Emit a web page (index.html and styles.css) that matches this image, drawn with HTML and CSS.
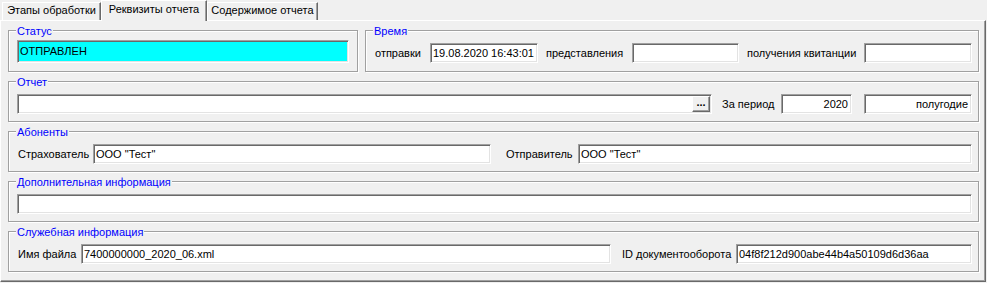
FILE: index.html
```html
<!DOCTYPE html>
<html lang="ru">
<head>
<meta charset="utf-8">
<title>Реквизиты отчета</title>
<link rel="stylesheet" href="styles.css">
</head>
<body>
<div class="tabs">
  <div class="tab tab-stages">Этапы обработки</div>
  <div class="tab tab-active">Реквизиты отчета</div>
  <div class="tab tab-content">Содержимое отчета</div>
</div>
<div class="panel">
  <div class="row-top">
    <div class="grp grp-status">
      <span class="legend">Статус</span>
      <div class="field field-status">ОТПРАВЛЕН</div>
    </div>
    <div class="grp grp-time">
      <span class="legend">Время</span>
      <div class="line line-time">
        <span class="lbl lbl-first">отправки</span>
        <div class="field">19.08.2020 16:43:01</div>
        <span class="lbl">представления</span>
        <div class="field"></div>
        <span class="lbl">получения квитанции</span>
        <div class="field"></div>
      </div>
    </div>
  </div>
  <div class="grp">
    <span class="legend">Отчет</span>
    <div class="line line-report">
      <div class="field field-btn"><span class="fill"></span><span class="btn">...</span></div>
      <span class="lbl lbl-period">За период</span>
      <div class="field field-right">2020</div>
      <div class="field field-right field-half">полугодие</div>
    </div>
  </div>
  <div class="grp">
    <span class="legend">Абоненты</span>
    <div class="line line-subs">
      <span class="lbl lbl-first">Страхователь</span>
      <div class="field">ООО "Тест"</div>
      <span class="lbl lbl-sender">Отправитель</span>
      <div class="field">ООО "Тест"</div>
    </div>
  </div>
  <div class="grp">
    <span class="legend">Дополнительная информация</span>
    <div class="line line-full">
      <div class="field"></div>
    </div>
  </div>
  <div class="grp">
    <span class="legend">Служебная информация</span>
    <div class="line line-service">
      <span class="lbl lbl-first">Имя файла</span>
      <div class="field">7400000000_2020_06.xml</div>
      <span class="lbl lbl-id">ID документооборота</span>
      <div class="field">04f8f212d900abe44b4a50109d6d36aa</div>
    </div>
  </div>
</div>
</body>
</html>
```

FILE: styles.css
```css
* { box-sizing: border-box; }

body {
  margin: 0;
  background: #f0f0f0;
  font-family: "Liberation Sans", Arial, sans-serif;
  font-size: 11px;
  line-height: 13px;
  color: #000;
}

/* Tabs */
.tabs {
  display: flex;
  align-items: flex-end;
  height: 20px;
  padding-left: 2px;
}

.tab {
  height: 18px;
  padding-top: 1px;
  text-align: center;
  white-space: nowrap;
  border-top: 1px solid #fff;
  border-left: 1px solid #fff;
  border-right: 1px solid #696969;
  box-shadow: inset -1px 0 0 #a0a0a0;
}

.tab-stages { width: 99px; }
.tab-content { width: 111px; }

.tab-active {
  width: 106px;
  height: 21px;
  margin-bottom: -1px;
  padding-top: 2px;
  background: #f0f0f0;
  z-index: 1;
}

/* Panel */
.panel {
  width: 986px;
  height: 262px;
  border: 1px solid;
  border-color: #fff #696969 #696969 #fff;
  box-shadow: inset -1px -1px 0 #a0a0a0;
  padding: 9px 6px 9px 7px;
  display: flex;
  flex-direction: column;
  gap: 9px;
}

.row-top {
  display: flex;
  gap: 7px;
}

.grp {
  border: 1px solid #a0a0a0;
  box-shadow: 1px 1px 0 #fff, inset 1px 1px 0 #fff;
  padding: 0 6px 7px 8px;
  display: flex;
  flex-direction: column;
}

.grp-status {
  width: 350px;
  padding-right: 8px;
  padding-bottom: 8px;
}

.grp-time { flex: 1; }

.legend {
  align-self: flex-start;
  margin: -6px 0 0 -1px;
  padding: 0 1px;
  background: #f0f0f0;
  color: #0000ff;
  line-height: 13px;
  white-space: nowrap;
}

.line {
  margin-top: 5px;
  display: grid;
  align-items: center;
}

.line-time { grid-template-columns: 56px 108px 94px 107px 125px 108px; }
.line-report { grid-template-columns: 695px 69px 71px 120px; }
.line-subs { grid-template-columns: 76px 398px 87px 394px; }
.line-full { grid-template-columns: 1fr; }
.line-service { grid-template-columns: 64px 530px 125px 236px; }

.lbl {
  white-space: nowrap;
  padding-left: 8px;
}

.lbl-first { padding-left: 1px; }
.lbl-period { padding-left: 10px; }
.lbl-sender { padding-left: 15px; }
.lbl-id { padding-left: 11px; }

/* Sunken edit field */
.field {
  height: 20px;
  background: #fff;
  border: 1px solid;
  border-color: #a0a0a0 #fff #fff #a0a0a0;
  box-shadow: inset 1px 1px 0 #696969, inset -1px -1px 0 #e3e3e3;
  padding: 0 2px 0 2px;
  display: flex;
  align-items: center;
  white-space: nowrap;
  overflow: hidden;
}

.field-status {
  height: 23px;
  margin-top: 2px;
  background: #00ffff;
}

.field-right { justify-content: flex-end; padding-right: 3px; }
.field-half { margin-left: 12px; }

.field-btn {
  padding: 1px 1px 1px 2px;
  align-items: stretch;
}

.fill { flex: 1; }

.btn {
  width: 18px;
  background: #f0f0f0;
  border: 1px solid;
  border-color: #fff #696969 #696969 #fff;
  box-shadow: inset -1px -1px 0 #a0a0a0;
  font-weight: bold;
  font-size: 11px;
  line-height: 10px;
  text-align: center;
  overflow: hidden;
}
```
